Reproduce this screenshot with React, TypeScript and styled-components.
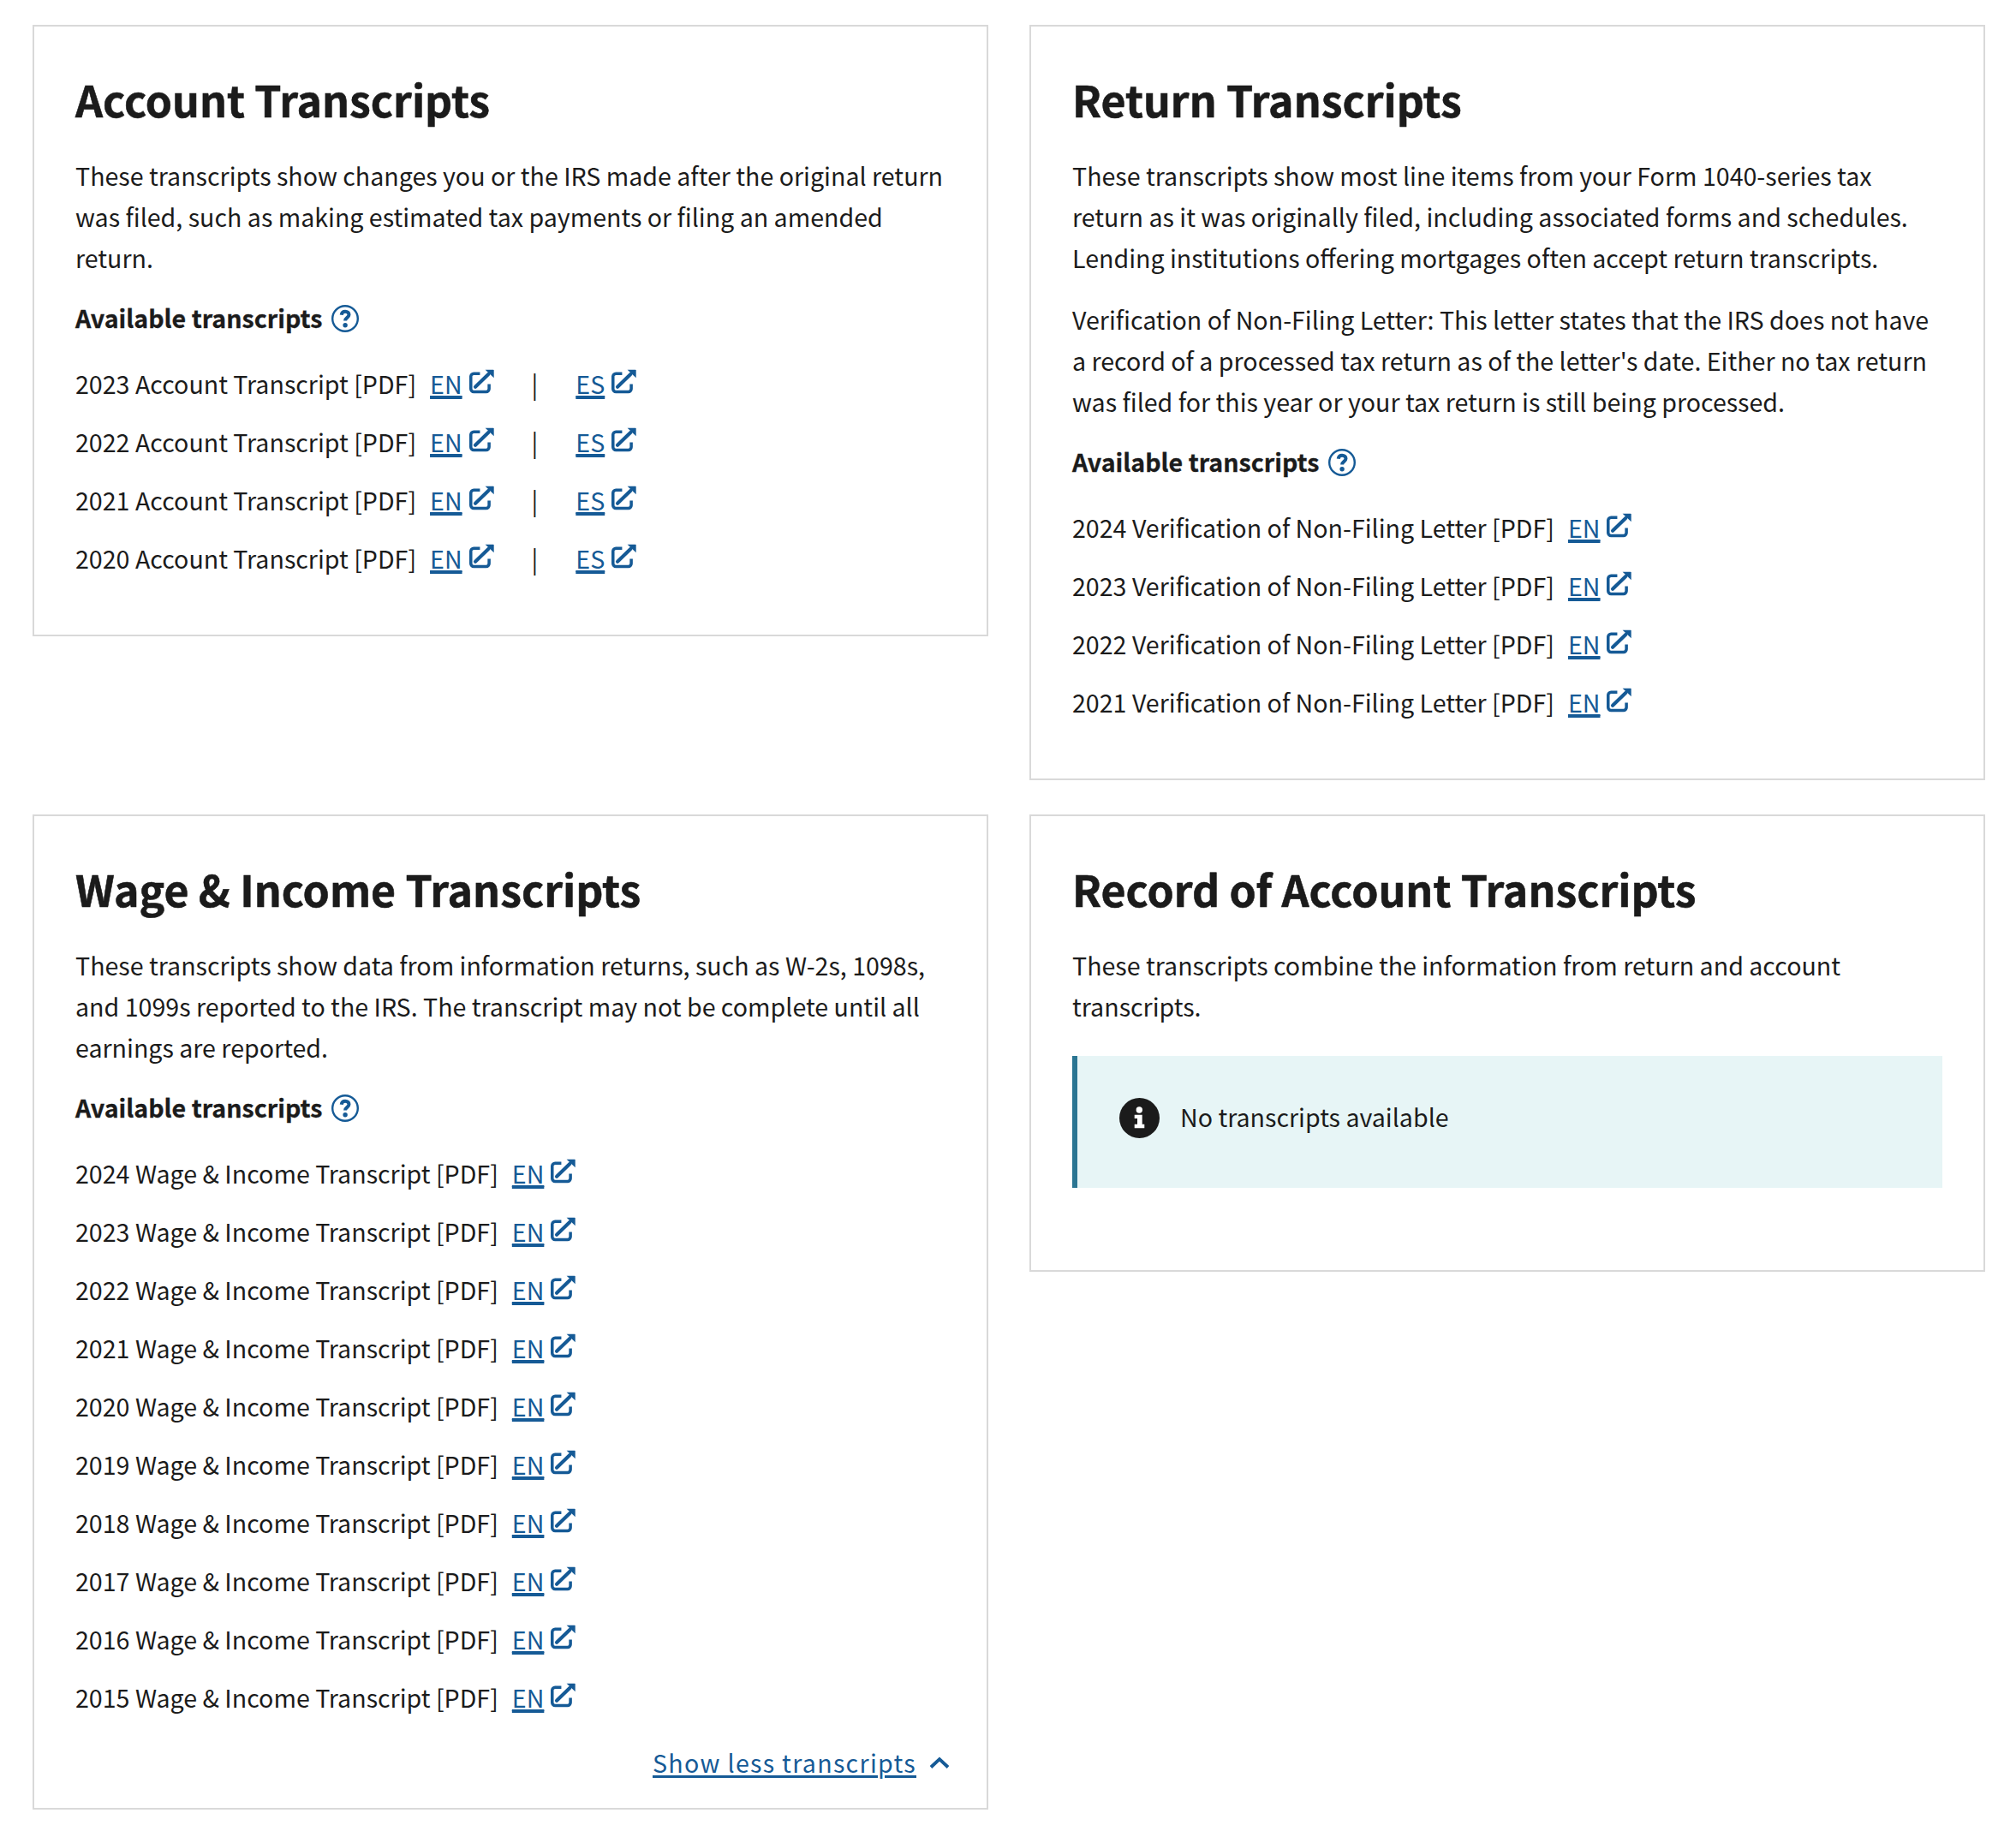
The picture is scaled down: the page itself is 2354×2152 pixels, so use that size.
import React from "react";
import styled, { createGlobalStyle } from "styled-components";

const GlobalStyle = createGlobalStyle`
  html, body {
    margin: 0;
    padding: 0;
    background: #fff;
  }
  body {
    font-family: "Noto Sans CJK SC", "Source Sans Pro", "Open Sans", sans-serif;
    color: #1b1b1b;
    font-size: 28.6px;
    line-height: 48px;
  }
`;

const Page = styled.main`
  display: grid;
  grid-template-columns: 1116px 1116px;
  column-gap: 48px;
  row-gap: 40px;
  align-items: start;
  padding: 29px 37px 32px 38px;
`;

const Card = styled.section`
  border: 2px solid #d9d9d9;
  padding: 48px 48px 55px;
`;

const Title = styled.h2`
  margin: 0 0 30px;
  font-size: 50px;
  line-height: 72px;
  font-weight: 700;
  -webkit-text-stroke: 0.6px currentColor;
`;

const Para = styled.p`
  margin: 0 0 24px;
`;

const AvailableLabel = styled.div`
  display: flex;
  align-items: center;
  gap: 11px;
  font-weight: 700;
  margin: -2px 0 19px;
  -webkit-text-stroke: 0.3px currentColor;
  svg {
    margin-top: 2px;
  }
`;

const Row = styled.div`
  display: flex;
  align-items: baseline;
  padding: 10px 0;
  white-space: pre;
`;

const LangLink = styled.a<{ $first?: boolean }>`
  display: inline-flex;
  align-items: baseline;
  color: #155a96;
  margin-left: ${({ $first }) => ($first ? "16px" : "0")};
  span {
    text-decoration: underline;
    text-decoration-thickness: 3px;
    text-underline-offset: 3px;
  }
  svg {
    margin-left: 8px;
  }
`;

const Divider = styled.span`
  margin: 0 44px;
`;

const Alert = styled.div`
  display: flex;
  align-items: center;
  gap: 24px;
  height: 154px;
  box-sizing: border-box;
  background: #e7f5f6;
  border-left: 6px solid #2a7592;
  padding: 0 0 9px 49px;
  margin: 34px 0 41px;
`;

const AlertText = styled.span`
  margin-top: -4px;
`;

const ShowMore = styled.div`
  display: flex;
  justify-content: flex-end;
  align-items: center;
  gap: 15px;
  margin: 18px -5px -26px 0;
  color: #155a96;
  letter-spacing: 1.3px;
  a {
    color: inherit;
    text-decoration: underline;
    text-decoration-thickness: 3px;
    text-underline-offset: 3px;
  }
`;

const ExternalIcon = () => (
  <svg width="29" height="29" viewBox="0 0 28 28" fill="none" aria-hidden="true">
    <path d="M12 5H5a3.300 3.300 0 0 0-3.300 3.300v14a3.300 3.300 0 0 0 3.300 3.300h14a3.300 3.300 0 0 0 3.300-3.300V17" stroke="#155a96" strokeWidth="3.400" />
    <path d="M6.800 20 21.500 5.800" stroke="#155a96" strokeWidth="4" strokeLinecap="round" />
    <path d="M18 .7H27a.7.7 0 0 1 .7.7V10z" fill="#155a96" />
  </svg>
);

const HelpIcon = () => (
  <svg width="32" height="32" viewBox="0 0 32 32" aria-hidden="true">
    <circle cx="16" cy="16" r="14.800" fill="none" stroke="#155a96" strokeWidth="2.400" />
    <path d="M11.700 11.700c.3-2.500 2-3.900 4.400-3.900 2.700 0 4.400 1.500 4.400 3.700 0 3.400-4.400 3.400-4.400 7" fill="none" stroke="#155a96" strokeWidth="4" />
    <circle cx="16.100" cy="23.800" r="2.700" fill="#155a96" />
  </svg>
);

const InfoIcon = () => (
  <svg width="47" height="47" viewBox="0 0 47 47" aria-hidden="true">
    <circle cx="23.500" cy="23.500" r="23.500" fill="#1b1b1b" />
    <circle cx="23.300" cy="14" r="3.700" fill="#fff" />
    <path d="M17.700 19.700h9v11h2.600v4.600H17.700v-4.600H21V24h-3.300z" fill="#fff" />
  </svg>
);

const ChevronUp = () => (
  <svg width="24" height="15" viewBox="0 0 24 15" fill="none" aria-hidden="true">
    <path d="M2 12.500 12 3l10 9.500" stroke="#155a96" strokeWidth="3.800" />
  </svg>
);

const TranscriptRow = ({ label, es }: { label: string; es?: boolean }) => (
  <Row>
    {label} [PDF]
    <LangLink $first href="#">
      <span>EN</span>
      <ExternalIcon />
    </LangLink>
    {es && (
      <>
        <Divider>|</Divider>
        <LangLink href="#">
          <span>ES</span>
          <ExternalIcon />
        </LangLink>
      </>
    )}
  </Row>
);

const Available = () => (
  <AvailableLabel>
    Available transcripts
    <HelpIcon />
  </AvailableLabel>
);

const App = () => (
  <>
    <GlobalStyle />
    <Page>
      <Card>
        <Title>Account Transcripts</Title>
        <Para>
          These transcripts show changes you or the IRS made after the original
          return was filed, such as making estimated tax payments or filing an
          amended return.
        </Para>
        <Available />
        {[2023, 2022, 2021, 2020].map((y) => (
          <TranscriptRow key={y} label={`${y} Account Transcript`} es />
        ))}
      </Card>
      <Card>
        <Title>Return Transcripts</Title>
        <Para>
          These transcripts show most line items from your Form 1040-series tax
          return as it was originally filed, including associated forms and
          schedules. Lending institutions offering mortgages often accept return
          transcripts.
        </Para>
        <Para>
          Verification of Non-Filing Letter: This letter states that the IRS does
          not have a record of a processed tax return as of the letter's date.
          Either no tax return was filed for this year or your tax return is
          still being processed.
        </Para>
        <Available />
        {[2024, 2023, 2022, 2021].map((y) => (
          <TranscriptRow key={y} label={`${y} Verification of Non-Filing Letter`} />
        ))}
      </Card>
      <Card>
        <Title>Wage &amp; Income Transcripts</Title>
        <Para>
          These transcripts show data from information returns, such as W-2s,
          1098s, and 1099s reported to the IRS. The transcript may not be complete
          until all earnings are reported.
        </Para>
        <Available />
        {[2024, 2023, 2022, 2021, 2020, 2019, 2018, 2017, 2016, 2015].map((y) => (
          <TranscriptRow key={y} label={`${y} Wage & Income Transcript`} />
        ))}
        <ShowMore>
          <a href="#">Show less transcripts</a>
          <ChevronUp />
        </ShowMore>
      </Card>
      <Card>
        <Title>Record of Account Transcripts</Title>
        <Para>
          These transcripts combine the information from return and account
          transcripts.
        </Para>
        <Alert>
          <InfoIcon />
          <AlertText>No transcripts available</AlertText>
        </Alert>
      </Card>
    </Page>
  </>
);

export default App;
